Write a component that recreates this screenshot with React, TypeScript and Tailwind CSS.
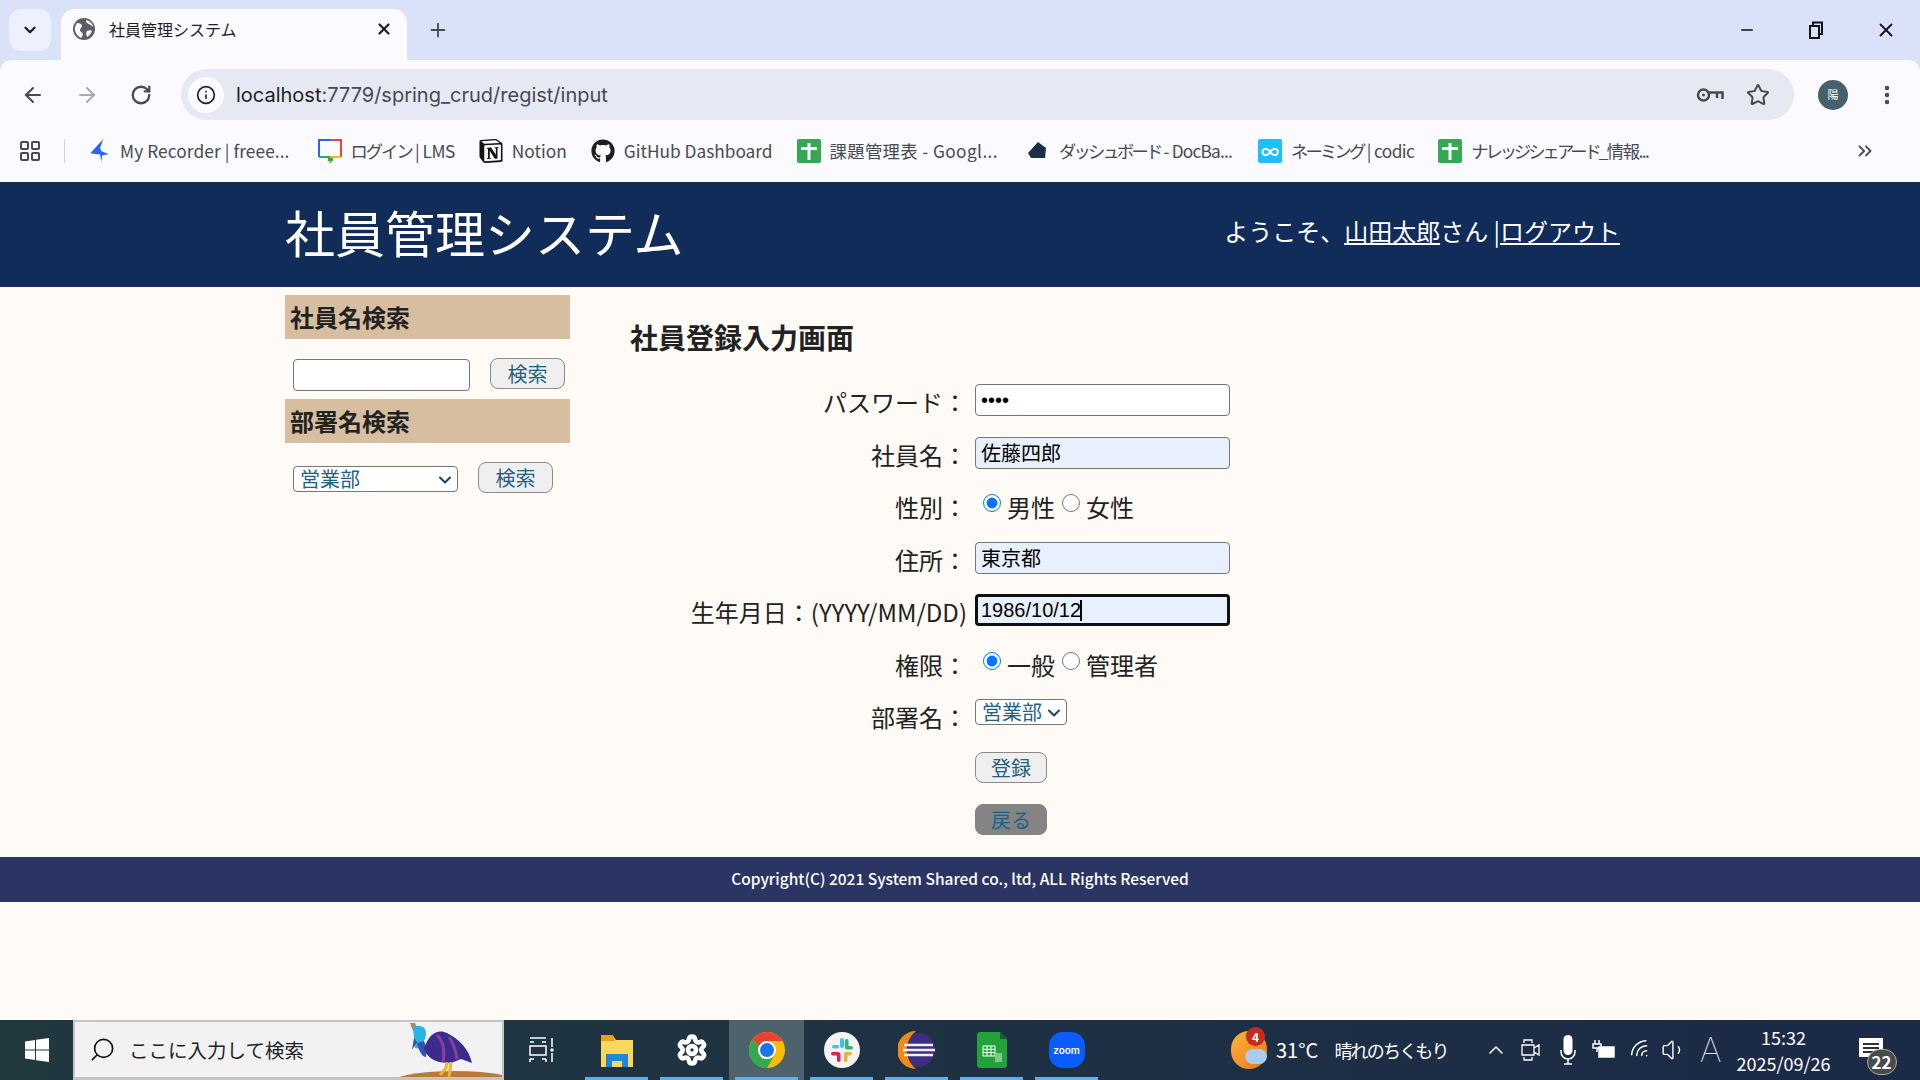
import { ArrowLeft, ArrowRight, ChevronDown, ChevronUp, ChevronsRight, Info, LayoutGrid, Minus, Plus, RotateCw, Search, Star, X, Settings, MoreVertical, Volume1, Wifi } from "lucide-react";
import { FaGithub } from "react-icons/fa";
import { SiNotion } from "react-icons/si";

const jp = "font-['Noto_Sans_CJK_JP','Noto_Sans',sans-serif]";

function SheetIcon() {
    return (
        <svg width="24" height="24" viewBox="0 0 24 24">
            <rect width="24" height="24" rx="2" fill="#34a853" />
            <rect x="10.5" y="4" width="3" height="17" fill="#fff" />
            <rect x="4" y="8" width="16" height="3" fill="#fff" />
        </svg>
    );
}

function Bookmark({ icon, label, className, labelClass }: { icon: React.ReactNode; label: React.ReactNode; className: string; labelClass?: string }) {
    return (
        <div className={"flex items-center " + className}>
            <span className="flex w-[33px] justify-start">{icon}</span>
            <span className={"whitespace-pre text-[17.300px] text-[#474a50] " + (labelClass ?? "")}>{label}</span>
        </div>
    );
}

function BrowserChrome() {
    return (
        <div className="bg-[#dae2f9]">
            {/* tab strip */}
            <div className="flex h-[60px] items-end">
                <div className="mb-[9px] ml-[9px] flex h-[42px] w-[42px] items-center justify-center rounded-[12px] bg-[#edf1fd]">
                    <ChevronDown size={18} strokeWidth={3} className="text-[#1f1f1f]" />
                </div>
                <div className="ml-[10px] flex h-[51px] w-[346px] items-center rounded-t-[14px] bg-[#fafaff] pb-[11px] pl-[12px] pr-[14px]">
                    <svg width="22" height="22" viewBox="0 0 22 22">
                        <circle cx="11" cy="11" r="11" fill="#5b5e66" />
                        <path d="M4 5c3 0 5 1 5 3s-2 2-2 4 3 2 3 5l-2 3C4 18 1 13 2 9zM13 2c0 3 1 3 3 4s3 2 4 3c0-3-3-6-7-7zM14 13c2-1 4-1 5 0-1 3-3 5-5 6-1-2-1-5 0-6z" fill="#fafaff" />
                    </svg>
                    <span className={"ml-[14px] flex-1 text-[16px] text-[#1f1f1f] " + jp}>社員管理システム</span>
                    <X size={18} strokeWidth={3} className="text-[#1f1f1f]" />
                </div>
                <Plus size={22} strokeWidth={2} className="mb-[19px] ml-[20px] text-[#474a50]" />
                <div className="mb-[19px] ml-auto flex items-center text-[#111]">
                    <Minus size={18} strokeWidth={2} className="mr-[52px]" />
                    <svg width="16" height="18" viewBox="0 0 16 18" fill="none" stroke="#111" strokeWidth="2" className="mr-[51px]">
                        <rect x="2" y="5" width="9" height="12" />
                        <path d="M5 5V1.500h9V13h-3" />
                    </svg>
                    <X size={22} strokeWidth={2} className="mr-[23px]" />
                </div>
            </div>
            {/* toolbar */}
            <div className="h-[122px] rounded-t-[12px] bg-[#fafaff]">
                <div className="flex h-[60px] items-center pt-[9px]">
                    <ArrowLeft size={24} strokeWidth={2} className="ml-[21px] text-[#474a50]" />
                    <ArrowRight size={24} strokeWidth={2} className="ml-[30px] text-[#a8abb2]" />
                    <RotateCw size={22} strokeWidth={2.500} className="ml-[31px] text-[#474a50]" />
                    <div className="ml-[29px] flex h-[51px] w-[1613px] items-center rounded-full bg-[#e6e9f4] pl-[7px] pr-[24px]">
                        <div className="flex h-[36px] w-[36px] items-center justify-center rounded-full bg-[#fafaff]">
                            <Info size={20} strokeWidth={2} className="text-[#1f1f1f]" />
                        </div>
                        <span className={"ml-[12px] flex-1 text-[20px] text-[#474a50] font-['Inter',sans-serif]"}>
                            <span className="text-[#1f1f1f]">localhost</span>:7779/spring_crud/regist/input
                        </span>
                        <svg width="28" height="16" viewBox="0 0 28 16" fill="none" stroke="#474a50" strokeWidth="2.500" className="mr-[22px]">
                            <circle cx="7.500" cy="8" r="5.500" />
                            <circle cx="7.500" cy="8" r="1.500" fill="#474a50" strokeWidth="0" />
                            <path d="M13 5.500h13.500V12M21 6v5" />
                        </svg>
                        <Star size={24} strokeWidth={2} className="text-[#474a50]" />
                    </div>
                    <div className={"ml-[24px] flex h-[30px] w-[30px] items-center justify-center rounded-full bg-[#47606d] text-[11px] text-white " + jp}>陽</div>
                    <MoreVertical size={24} strokeWidth={2.500} className="ml-[27px] text-[#474a50]" />
                </div>
                {/* bookmarks */}
                <div className={"flex h-[62px] items-center " + jp}>
                    <LayoutGrid size={24} strokeWidth={2} className="ml-[18px] text-[#474a50]" />
                    <div className="ml-[22px] h-[24px] w-px bg-[#c8d3e8]" />
                    <Bookmark
                        className="ml-[22px]"
                        label="My Recorder | freee..."
                        labelClass="tracking-[0.100px]"
                        icon={
                            <svg width="24" height="26" viewBox="0 0 22 24">
                                <path d="M15 1 3 14l6 1-1 0 4 0 1 7 1-6 6-1-7-3-1-3z" fill="#2864f0" />
                            </svg>
                        }
                    />
                    <Bookmark
                        className="ml-[28px]"
                        label={
                            <>
                                <span className="tracking-[-2px]">ログイン</span>
                                <span className="tracking-[-0.500px]"> | LMS</span>
                            </>
                        }
                        icon={
                            <svg width="24" height="26" viewBox="0 0 24 26" fill="none">
                                <path d="M1 19V2h12" stroke="#2864f0" strokeWidth="2" />
                                <path d="M13 2h10v17" stroke="#e8453c" strokeWidth="2" />
                                <path d="M23 19H12" stroke="#f4b400" strokeWidth="2" />
                                <path d="M12 19H1" stroke="#34a853" strokeWidth="2" />
                                <rect x="10" y="20" width="5" height="3" fill="#34a853" />
                                <rect x="11" y="23" width="3" height="2" fill="#f4b400" />
                            </svg>
                        }
                    />
                    <Bookmark className="ml-[24px]" label="Notion" icon={<SiNotion size={24} className="text-[#111]" />} />
                    <Bookmark className="ml-[24px]" label="GitHub Dashboard" icon={<FaGithub size={24} className="text-[#1f1f1f]" />} />
                    <Bookmark className="ml-[24px]" label="課題管理表 - Googl..." labelClass="tracking-[0.400px]" icon={<SheetIcon />} />
                    <Bookmark
                        className="ml-[28px]"
                        label={
                            <>
                                <span className="tracking-[-2.800px]">ダッシュボード</span>
                                <span className="tracking-[-0.800px]"> - DocBa...</span>
                            </>
                        }
                        icon={
                            <svg width="24" height="24" viewBox="0 0 24 24">
                                <path d="M12 3l8 6-1 10H5l-3-5z" fill="#1c2f45" />
                            </svg>
                        }
                    />
                    <Bookmark
                        className="ml-[26px]"
                        label={
                            <>
                                <span className="tracking-[-2.800px]">ネーミング</span>
                                <span className="tracking-[-0.600px]"> | codic</span>
                            </>
                        }
                        icon={
                            <div className="flex h-[24px] w-[24px] items-center justify-center rounded-[2px] bg-[#1bc1fa] text-[18px] font-bold leading-none text-white">∞</div>
                        }
                    />
                    <Bookmark
                        className="ml-[24px]"
                        label={
                            <>
                                <span className="tracking-[-3px]">ナレッジシェアード</span>
                                <span className="tracking-[-1.500px]">_情報...</span>
                            </>
                        }
                        icon={<SheetIcon />}
                    />
                    <ChevronsRight size={22} strokeWidth={2} className="ml-auto mr-[44px] text-[#474a50]" />
                </div>
            </div>
        </div>
    );
}

function SideHeading({ children }: { children: React.ReactNode }) {
    return <div className="flex h-[44px] items-center bg-[#d7bea0] pl-[5px] text-[24px] font-bold text-[#222]">{children}</div>;
}

function PageButton({ label, className }: { label: string; className: string }) {
    return (
        <button className={"h-[31px] rounded-[8px] border border-[#8a8a8a] text-[20px] leading-none text-[#1d6283] " + className}>
            {label}
        </button>
    );
}

function DeptSelect({ className }: { className: string }) {
    return (
        <div className={"relative h-[26px] " + className}>
            <select className="h-full w-full appearance-none rounded-[4px] border border-[#767676] bg-white pl-[6px] text-[20px] leading-none text-[#1d6283]">
                <option>営業部</option>
            </select>
            <ChevronDown size={20} strokeWidth={2.500} className="absolute right-[3px] top-[4px] text-[#174a63]" />
        </div>
    );
}

function FormRow({ label, children }: { label: string; children: React.ReactNode }) {
    return (
        <div className="flex h-[52.5px] items-start">
            <div className="w-[337px] text-right text-[24px] leading-[36px] text-[#222]">{label}</div>
            <div className="ml-[8px] flex-1">{children}</div>
        </div>
    );
}

const textInput = "h-[32px] w-[255px] rounded-[4px] text-[20px] leading-none text-black font-['Liberation_Sans','Noto_Sans_CJK_JP',sans-serif]";

function Radio({ label, checked, name }: { label: string; checked?: boolean; name: string }) {
    return (
        <label className="flex items-start">
            <input type="radio" name={name} defaultChecked={checked} className="ml-[8px] mr-[6px] mt-[5px] h-[18px] w-[18px] accent-[#0075ff]" />
            <span className="-mr-[1px] text-[24px] leading-[36px] text-[#222]">{label}</span>
        </label>
    );
}

function Page() {
    return (
        <div className={"flex flex-1 flex-col bg-[#fefaf5] " + jp}>
            <header className="h-[105px] bg-[#112c58]">
                <div className="mx-auto flex h-full w-[1350px] items-center justify-between pb-[8px] pr-[15px] text-white">
                    <div className="text-[50px] leading-none">社員管理システム</div>
                    <div className="whitespace-pre text-[24px]">
                        ようこそ、<span className="underline">山田太郎</span>さん |<span className="underline">ログアウト</span>
                    </div>
                </div>
            </header>

            <div className="mx-auto flex h-[570px] w-[1350px]">
                {/* sidebar */}
                <aside className="w-[285px] pt-[8px]">
                    <SideHeading>社員名検索</SideHeading>
                    <div className="flex h-[60px] items-start pl-[8px] pt-[19px]">
                        <input className="mt-[1px] h-[32px] w-[177px] rounded-[4px] border border-[#767676] bg-white" />
                        <PageButton label="検索" className="ml-[20px] w-[75px] bg-[#efefef]" />
                    </div>
                    <SideHeading>部署名検索</SideHeading>
                    <div className="flex h-[60px] items-start pl-[8px] pt-[19px]">
                        <DeptSelect className="mt-[4px] w-[165px]" />
                        <PageButton label="検索" className="ml-[20px] w-[75px] bg-[#efefef]" />
                    </div>
                </aside>

                {/* registration form */}
                <main className="ml-[60px] flex-1 pt-[32px]">
                    <h2 className="mb-[29px] text-[28px] font-bold leading-[36px] text-[#222]">社員登録入力画面</h2>
                    <div>
                        <FormRow label="パスワード：">
                            <input type="password" defaultValue="pass" className={textInput + " border border-[#767676] bg-white pl-[5px]"} />
                        </FormRow>
                        <FormRow label="社員名：">
                            <input defaultValue="佐藤四郎" className={textInput + " border border-[#767676] bg-[#e8f0fe] pl-[5px]"} />
                        </FormRow>
                        <FormRow label="性別：">
                            <div className="flex">
                                <Radio name="gender" label="男性" checked />
                                <Radio name="gender" label="女性" />
                            </div>
                        </FormRow>
                        <FormRow label="住所：">
                            <input defaultValue="東京都" className={textInput + " border border-[#767676] bg-[#e8f0fe] pl-[5px]"} />
                        </FormRow>
                        <FormRow label="生年月日：(YYYY/MM/DD)">
                            <div className="relative w-[255px]">
                                <input defaultValue="1986/10/12" className={textInput + " border-[3px] border-[#101010] bg-[#e8f0fe] pl-[3px] outline-none"} />
                                <span className="absolute left-[105px] top-[6px] h-[21px] w-[2px] bg-black" />
                            </div>
                        </FormRow>
                        <FormRow label="権限：">
                            <div className="flex">
                                <Radio name="role" label="一般" checked />
                                <Radio name="role" label="管理者" />
                            </div>
                        </FormRow>
                        <FormRow label="部署名：">
                            <DeptSelect className="w-[92px]" />
                        </FormRow>
                        <FormRow label="">
                            <PageButton label="登録" className="w-[72px] bg-[#efefef] pt-[2px]" />
                        </FormRow>
                        <FormRow label="">
                            <PageButton label="戻る" className="w-[72px] border-[#848484] bg-[#848484]" />
                        </FormRow>
                    </div>
                </main>
            </div>

            <footer className="flex h-[45px] items-center justify-center bg-[#2b3563] pb-[2px] text-[15.500px] font-medium text-white">
                Copyright(C) 2021 System Shared co., ltd, ALL Rights Reserved
            </footer>
        </div>
    );
}

function TaskSlot({ children, active, underline }: { children: React.ReactNode; active?: boolean; underline?: boolean }) {
    return (
        <div className={"relative flex h-full w-[75px] items-center justify-center " + (active ? "bg-[#4e626b]" : "")}>
            {children}
            {underline && <span className="absolute bottom-0 left-[6px] right-[6px] h-[3px] bg-[#64aee6]" />}
        </div>
    );
}

function Taskbar() {
    return (
        <div className={"flex h-[60px] items-center bg-gradient-to-r from-[#21383f] to-[#1b2a47] text-white " + jp}>
            <div className="flex h-full w-[73px] items-center justify-center">
                <svg width="24" height="24" viewBox="0 0 24 24" fill="#fff">
                    <path d="M0 3.500 10 2v9.500H0zM11 1.800 24 0v11.500H11zM0 12.500h10V22L0 20.500zM11 12.500h13V24l-13-1.800z" />
                </svg>
            </div>
            <div className="relative flex h-full w-[431px] items-center overflow-hidden border-2 border-b-[3px] border-[#c4c4c4] bg-[#f2f2f2] pl-[14px] text-[#222]">
                <Search size={27} strokeWidth={1.500} className="-scale-x-100 text-[#111]" />
                <span className="ml-[13px] text-[19.500px]">ここに入力して検索</span>
                {/* cassowary on its hill */}
                <svg width="125" height="58" viewBox="0 0 125 58" className="absolute bottom-0 right-0">
                    <ellipse cx="78" cy="66" rx="68" ry="14" fill="#b97a3f" />
                    <path d="M33 4l5 0 3 6-5 2z" fill="#a08a78" />
                    <path d="M36 9c3-3 9-3 12 1 2 4 1 8-1 12l-3 8-6-1z" fill="#28b6e0" />
                    <path d="M37 19l-2 12 5-8z" fill="#3355aa" />
                    <path d="M40 24l7-2 3 8-1 8c-4 0-7-6-9-14z" fill="#3553b0" />
                    <path d="M47 30C52 13 62 10 70 14c12 6 22 16 25 30l-11-4-10 4C62 44 52 42 47 30z" fill="#3b2b8c" />
                    <path d="M60 16c6 6 8 16 6 27M72 18c4 6 7 14 8 22" stroke="#8a3f9e" strokeWidth="3" fill="none" />
                    <path d="M70 43l-1 6-6 7M74 43l-1 8-1 7" stroke="#eab530" strokeWidth="3" fill="none" />
                </svg>
            </div>
            <div className="flex h-full">
                <TaskSlot>
                    <svg width="26" height="26" viewBox="0 0 26 26" fill="none" stroke="#fff" strokeWidth="1.500">
                        <path d="M1 1h16M5 5H1M17 5h-4M1 9h16v9H1zM1 22h4M13 22h4M1 22v3M17 22v3M23 1v9M23 16v9" />
                        <circle cx="23" cy="13" r="1" fill="#fff" />
                    </svg>
                </TaskSlot>
                <TaskSlot underline>
                    <svg width="32" height="34" viewBox="0 0 32 34">
                        <path d="M0 3h12l3 4h17v27H0z" fill="#fcd75f" />
                        <path d="M0 2h12l2 6H0z" fill="#e2a511" />
                        <path d="M5 34V21h22v13h-6v-6h-10v6z" fill="#1e88d8" />
                    </svg>
                </TaskSlot>
                <TaskSlot underline>
                    <Settings size={32} strokeWidth={3.500} className="text-white" />
                </TaskSlot>
                <TaskSlot active underline>
                    <svg width="36" height="36" viewBox="0 0 36 36">
                        <circle cx="18" cy="18" r="18" fill="#fbbc04" />
                        <path d="M18 0a18 18 0 0 1 15.600 9H18a9 9 0 0 0-8 5L3.500 7.500A18 18 0 0 1 18 0z" fill="#ea4335" />
                        <path d="M3.500 7.500 10 14a9 9 0 0 0 0 8l4 6.500 L 11 35A18 18 0 0 1 3.500 7.500z" fill="#34a853" />
                        <path d="M14 26a9 9 0 0 0 11-2L18 36a18 18 0 0 1-7-1z" fill="#34a853" />
                        <circle cx="18" cy="18" r="9" fill="#fff" />
                        <circle cx="18" cy="18" r="7" fill="#1a73e8" />
                    </svg>
                </TaskSlot>
                <TaskSlot underline>
                    <svg width="36" height="36" viewBox="0 0 36 36">
                        <circle cx="18" cy="18" r="18" fill="#f4f4f4" />
                        <rect x="16" y="6" width="4" height="10" rx="2" fill="#36c5f0" />
                        <rect x="8" y="13" width="7" height="3.500" rx="1.700" fill="#36c5f0" />
                        <rect x="21" y="7" width="3.500" height="9" rx="1.700" fill="#2eb67d" />
                        <rect x="21" y="14" width="8" height="3.500" rx="1.700" fill="#2eb67d" />
                        <rect x="20" y="20" width="8" height="3.500" rx="1.700" fill="#ecb22e" />
                        <rect x="20" y="21" width="3.500" height="9" rx="1.700" fill="#ecb22e" />
                        <rect x="7" y="20" width="9" height="3.500" rx="1.700" fill="#e01e5a" />
                        <rect x="13" y="21" width="3.500" height="9" rx="1.700" fill="#e01e5a" />
                    </svg>
                </TaskSlot>
                <TaskSlot underline>
                    <svg width="38" height="38" viewBox="0 0 38 38">
                        <circle cx="20" cy="19" r="17" fill="#3c2f7d" />
                        <path d="M18 0A19 19 0 0 0 18 38 A24 24 0 0 1 18 0z" fill="#f08a14" />
                        <path d="M6 14h29M5 19h32M6 24h29" stroke="#f1eff8" strokeWidth="2.500" />
                    </svg>
                </TaskSlot>
                <TaskSlot underline>
                    <svg width="30" height="36" viewBox="0 0 30 36">
                        <path d="M3 0h20l7 7v26a3 3 0 0 1-3 3H3a3 3 0 0 1-3-3V3a3 3 0 0 1 3-3z" fill="#21a33a" />
                        <path d="M23 0l7 7h-7z" fill="#1d5a2b" />
                        <path d="M6 14h12v10H6zM6 17.300h12M6 20.600h12M10 14v10M14 14v10" stroke="#fff" strokeWidth="1" fill="none" />
                        <rect x="18" y="21" width="7" height="9" fill="#7cc98a" />
                    </svg>
                </TaskSlot>
                <TaskSlot underline>
                    <div className="flex h-[36px] w-[36px] items-center justify-center rounded-[14px] bg-[#0b5cff] font-['Inter',sans-serif] text-[10px] font-semibold text-white">zoom</div>
                </TaskSlot>
            </div>
            {/* weather */}
            <div className="relative ml-[127px] h-[38px] w-[36px]">
                <div className="absolute inset-0 rounded-full bg-gradient-to-br from-[#f8b83a] to-[#ee6f1c]" />
                <div className="absolute bottom-[5px] left-[14px] h-[15px] w-[22px] rounded-full bg-[#a9cdee]" />
                <div className="absolute -top-[4px] left-[15px] flex h-[19px] w-[19px] items-center justify-center rounded-full bg-[#c6291d] text-[12px] font-bold text-white">4</div>
            </div>
            <span className="ml-[9px] text-[20px]">31°C</span>
            <span className="ml-[16px] text-[18px] tracking-[-1.800px]">晴れのちくもり</span>
            <ChevronUp size={24} strokeWidth={1.500} className="ml-[36px]" />
            <svg width="20" height="26" viewBox="0 0 20 26" fill="none" stroke="#fff" strokeWidth="1.300" className="ml-[13px]">
                <path d="M3 6V3h8v3M3 20v3h8v-3M1 8h12v10H1zM13 11l5-3v10l-5-3z" />
            </svg>
            <svg width="16" height="30" viewBox="0 0 16 30" fill="none" stroke="#fff" strokeWidth="1.500" className="ml-[19px]">
                <rect x="3.500" y="0" width="9" height="20" rx="4.500" fill="#fff" stroke="none" />
                <path d="M1 15v2a7 7 0 0 0 14 0v-2M8 24v5M4 29h8" />
            </svg>
            <svg width="26" height="22" viewBox="0 0 26 22" className="ml-[14px]" fill="none" stroke="#fff" strokeWidth="1.500">
                <path d="M5 1v4M9 1v4M3 5h8v4H3zM7 9v4" />
                <rect x="9" y="8" width="15" height="10" fill="#fff" />
            </svg>
            <Wifi size={24} strokeWidth={1.500} className="ml-[13px] -rotate-45" />
            <Volume1 size={26} strokeWidth={1.300} className="ml-[8px]" />
            <span className="ml-[13px] font-['Inter',sans-serif] text-[34px] font-thin leading-none">A</span>
            <div className="ml-[15px] flex w-[94px] flex-col items-center text-[18px] leading-[26px]">
                <span>15:32</span>
                <span className="whitespace-nowrap">2025/09/26</span>
            </div>
            <div className="relative ml-[28px] h-[24px] w-[24px]">
                <div className="absolute left-0 top-0 flex h-[19px] w-[24px] flex-col justify-center gap-[2px] bg-white px-[4px]">
                    <span className="h-[2px] bg-[#333]" />
                    <span className="h-[2px] bg-[#333]" />
                    <span className="h-[2px] bg-[#333]" />
                </div>
                <div className="absolute left-[8px] top-[11px] flex h-[26px] w-[30px] items-center justify-center rounded-full border border-[#aaa] bg-[#4a4a4a] text-[17px] font-bold">22</div>
            </div>
        </div>
    );
}

export default function App() {
    return (
        <div className="flex h-[1080px] w-[1920px] flex-col overflow-hidden bg-[#fefaf5]">
            <BrowserChrome />
            <Page />
            <Taskbar />
        </div>
    );
}
